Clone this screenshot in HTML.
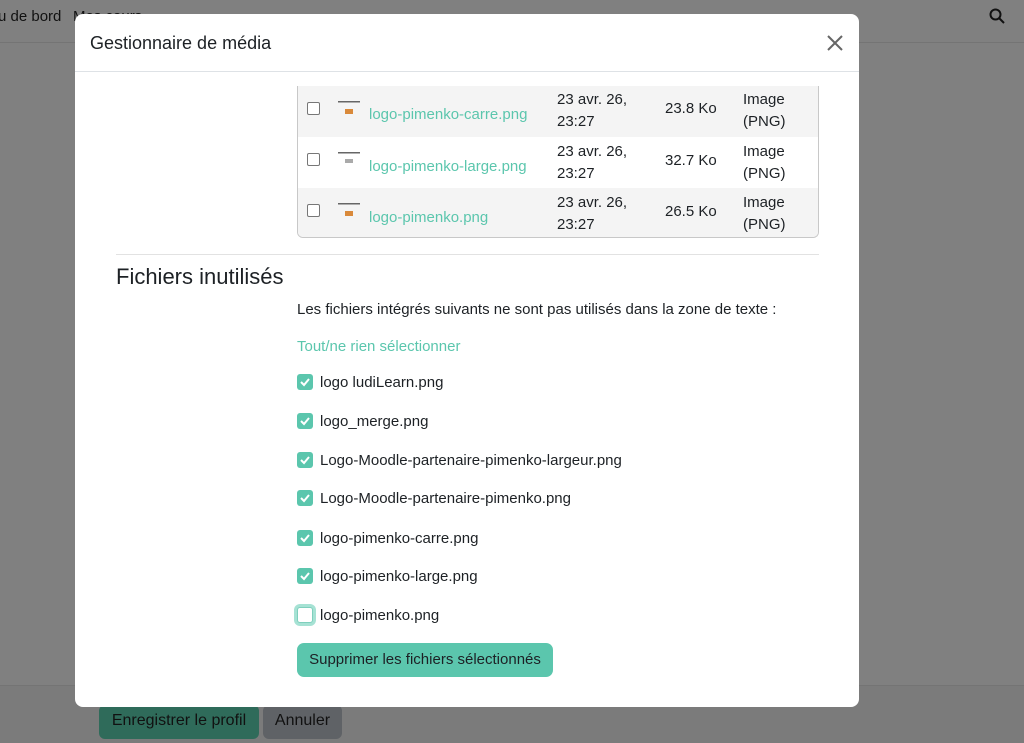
<!DOCTYPE html>
<html><head><meta charset="utf-8"><style>
*{box-sizing:border-box;margin:0;padding:0}
body{width:1024px;height:743px;overflow:hidden;background:#808080;font-family:"Liberation Sans",sans-serif;color:#1d2125;position:relative}
.nav{position:absolute;left:0;top:0;width:1024px;height:43px;border-bottom:1px solid #747474;font-size:15px;color:#111}
.foot{position:absolute;left:0;top:685px;width:1024px;height:58px;border-top:1px solid #747474;background:#7b7b7b}
.fb{position:absolute;top:705px;height:34px;border-radius:6px;font-size:16px;line-height:32px;text-align:center;color:#111}
.modal{position:absolute;left:75px;top:14px;width:784px;height:693px;background:#fff;border-radius:8px;overflow:hidden}
.hd{height:58px;border-bottom:1px solid #dee2e6;position:relative}
.hd h5{position:absolute;left:15px;top:19px;font-size:18px;font-weight:normal}
.x{position:absolute;right:14px;top:19px;width:20px;height:20px}
.tbl{position:absolute;left:222px;top:72px;width:522px;height:152px;border:1px solid #c8c8c8;border-top:none;border-radius:0 0 6px 6px;overflow:hidden;font-size:15px}
.row{height:51px;position:relative}
.row.g{background:#f4f4f4}
.row span{position:absolute}
.cb{position:absolute;left:9px;top:16px;width:13px;height:13px;border:1px solid #777;border-radius:2px;background:#fff}
.ic{position:absolute;left:40px;top:15px;width:22px;height:14px}
.lnk{color:#5bc6ad}
.sep{position:absolute;left:41px;top:240px;width:703px;border-top:1px solid #e2e2e2}
h3{position:absolute;left:41px;top:250px;font-size:22px;font-weight:normal}
.t{position:absolute;left:222px;font-size:15px}
.ck{position:absolute;left:222px;width:16px;height:16px;border-radius:3px;background:#5bc6ad}
.ck svg{position:absolute;left:2px;top:2px}
.btn{position:absolute;left:222px;top:629px;width:256px;height:34px;border-radius:7px;background:#5bc6ad;font-size:15px;line-height:34px;text-align:center}
</style></head><body>
<div class="nav"><span style="position:absolute;left:-2px;top:8px">u de bord</span><span style="position:absolute;left:73px;top:8px">Mes cours</span>
<svg style="position:absolute;left:989px;top:8px" width="16" height="16" viewBox="0 0 16 16"><circle cx="6.5" cy="6.5" r="5" fill="none" stroke="#111" stroke-width="2"/><path d="M10 10l5 5" stroke="#111" stroke-width="2"/></svg></div>
<div class="foot"></div>
<div class="fb" style="left:99px;width:160px;background:#2f6b5a">Enregistrer le profil</div>
<div class="fb" style="left:263px;width:79px;background:#5f6266">Annuler</div>
<div class="modal">
<div class="hd"><h5>Gestionnaire de média</h5>
<svg class="x" viewBox="0 0 20 20"><path d="M3 3L17 17M17 3L3 17" stroke="#666" stroke-width="2"/></svg></div>
<div class="tbl">
<div class="row g"><div class="cb"></div><svg class="ic" viewBox="0 0 22 14"><rect x="0" y="0" width="22" height="1.5" fill="#666"/><rect x="7" y="8" width="8" height="5" fill="#d9893a"/></svg><span class="lnk" style="left:71px;top:20px">logo-pimenko-carre.png</span><span style="left:259px;top:3px;line-height:22px">23 avr. 26,<br>23:27</span><span style="left:367px;top:14px">23.8 Ko</span><span style="left:445px;top:3px;line-height:22px">Image<br>(PNG)</span></div>
<div class="row"><div class="cb"></div><svg class="ic" viewBox="0 0 22 14"><rect x="0" y="0" width="22" height="1.5" fill="#666"/><rect x="7" y="7" width="8" height="4" fill="#aaa"/></svg><span class="lnk" style="left:71px;top:21px">logo-pimenko-large.png</span><span style="left:259px;top:4px;line-height:22px">23 avr. 26,<br>23:27</span><span style="left:367px;top:15px">32.7 Ko</span><span style="left:445px;top:4px;line-height:22px">Image<br>(PNG)</span></div>
<div class="row g"><div class="cb"></div><svg class="ic" viewBox="0 0 22 14"><rect x="0" y="0" width="22" height="1.5" fill="#666"/><rect x="7" y="8" width="8" height="5" fill="#d9893a"/></svg><span class="lnk" style="left:71px;top:21px">logo-pimenko.png</span><span style="left:259px;top:4px;line-height:22px">23 avr. 26,<br>23:27</span><span style="left:367px;top:15px">26.5 Ko</span><span style="left:445px;top:4px;line-height:22px">Image<br>(PNG)</span></div>
</div>
<div class="sep"></div>
<h3>Fichiers inutilisés</h3>
<div class="t" style="top:287px">Les fichiers intégrés suivants ne sont pas utilisés dans la zone de texte :</div>
<div class="t lnk" style="top:324px">Tout/ne rien sélectionner</div>
<div class="ck" style="top:360px"><svg width="12" height="12" viewBox="0 0 12 12"><path d="M2 6l3 3 5-6" stroke="#fff" stroke-width="2" fill="none"/></svg></div><div class="t" style="left:245px;top:360px">logo ludiLearn.png</div>
<div class="ck" style="top:399px"><svg width="12" height="12" viewBox="0 0 12 12"><path d="M2 6l3 3 5-6" stroke="#fff" stroke-width="2" fill="none"/></svg></div><div class="t" style="left:245px;top:399px">logo_merge.png</div>
<div class="ck" style="top:438px"><svg width="12" height="12" viewBox="0 0 12 12"><path d="M2 6l3 3 5-6" stroke="#fff" stroke-width="2" fill="none"/></svg></div><div class="t" style="left:245px;top:438px">Logo-Moodle-partenaire-pimenko-largeur.png</div>
<div class="ck" style="top:476px"><svg width="12" height="12" viewBox="0 0 12 12"><path d="M2 6l3 3 5-6" stroke="#fff" stroke-width="2" fill="none"/></svg></div><div class="t" style="left:245px;top:476px">Logo-Moodle-partenaire-pimenko.png</div>
<div class="ck" style="top:516px"><svg width="12" height="12" viewBox="0 0 12 12"><path d="M2 6l3 3 5-6" stroke="#fff" stroke-width="2" fill="none"/></svg></div><div class="t" style="left:245px;top:516px">logo-pimenko-carre.png</div>
<div class="ck" style="top:554px"><svg width="12" height="12" viewBox="0 0 12 12"><path d="M2 6l3 3 5-6" stroke="#fff" stroke-width="2" fill="none"/></svg></div><div class="t" style="left:245px;top:554px">logo-pimenko-large.png</div>
<div class="ck" style="top:593px;background:#fff;border:1px solid #7fcfbd;box-shadow:0 0 0 3px #a6e2d4"></div><div class="t" style="left:245px;top:593px">logo-pimenko.png</div>
<div class="btn">Supprimer les fichiers sélectionnés</div>
</div>
</body></html>
